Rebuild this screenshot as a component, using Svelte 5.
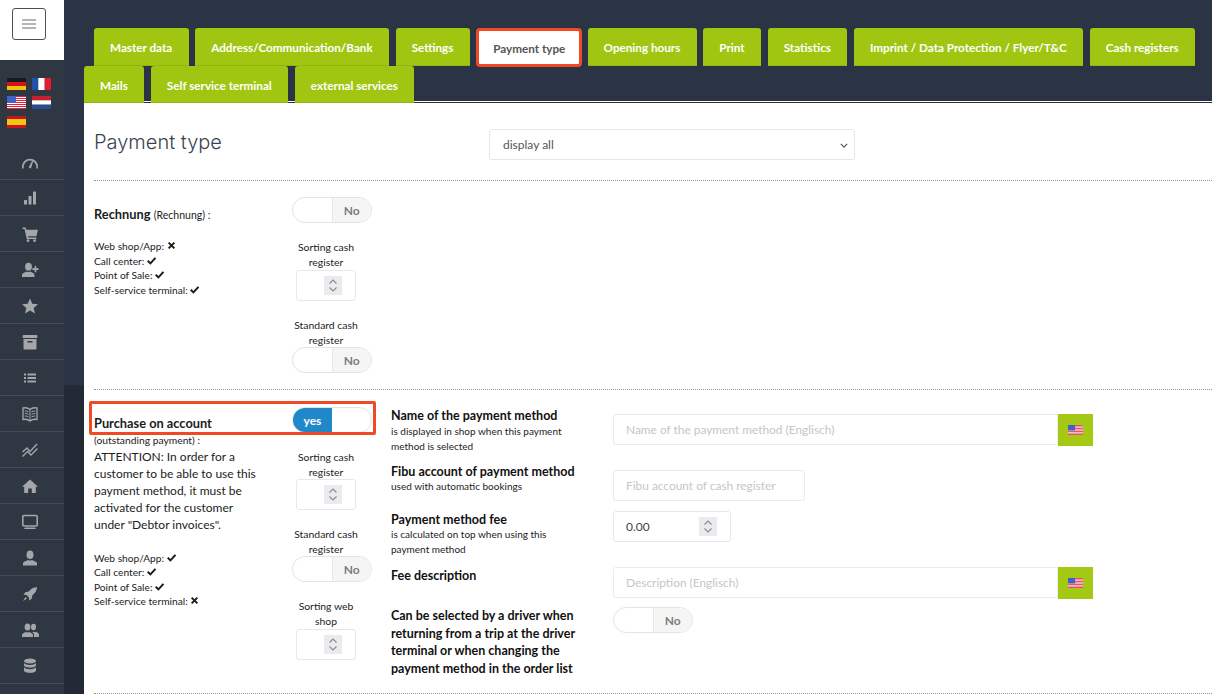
<script>
	const tabsTop = ['Master data', 'Address/Communication/Bank', 'Settings', 'Payment type', 'Opening hours', 'Print', 'Statistics', 'Imprint / Data Protection / Flyer/T&C', 'Cash registers'];
	const tabsBottom = ['Mails', 'Self service terminal', 'external services'];
	const menu = ['gauge', 'bars', 'cart', 'userplus', 'star', 'archive', 'list', 'book', 'chart', 'home', 'monitor', 'user', 'rocket', 'users', 'database'];
	const channelsA = [['Web shop/App:', false], ['Call center:', true], ['Point of Sale:', true], ['Self-service terminal:', true]];
	const channelsB = [['Web shop/App:', true], ['Call center:', true], ['Point of Sale:', true], ['Self-service terminal:', false]];
</script>

{#snippet usFlag()}
	<svg class="flag" viewBox="0 0 19 13" preserveAspectRatio="none">
		<rect width="19" height="13" fill="#fff" />
		{#each [0, 2, 4, 6, 8, 10, 12] as y}
			<rect {y} width="19" height="1" fill="#e0203a" />
		{/each}
		<rect width="9" height="7" fill="#3f62c4" />
	</svg>
{/snippet}

{#snippet toggle(on)}
	<div class="toggle">
		{#if on}
			<span class="side yes">yes</span><span class="side blank"></span>
		{:else}
			<span class="side blank"></span><span class="side no">No</span>
		{/if}
	</div>
{/snippet}

{#snippet spinner()}
	<span class="spinner">
		<svg viewBox="0 0 18 19" width="18" height="19" fill="none" stroke="#8a8a8e" stroke-width="1.1">
			<path d="M5.5 7.5 9 4l3.5 3.5M5.5 11.5 9 15l3.5-3.5" />
		</svg>
	</span>
{/snippet}

{#snippet channels(list)}
	<ul class="channels">
		{#each list as [name, ok]}
			<li>
				{name}
				<svg viewBox="0 0 10 10" width="9" height="9" fill="none" stroke="#1d1d1d" stroke-width="2.2">
					{#if ok}
						<path d="M.8 5.2 3.8 8.2 9.4 2" />
					{:else}
						<path d="M1.8 1.8 8.2 8.2M8.2 1.8 1.8 8.2" />
					{/if}
				</svg>
			</li>
		{/each}
	</ul>
{/snippet}

{#snippet icon(name)}
	<svg viewBox="0 0 18 18" width="18" height="18" fill="#a4a6aa">
		{#if name === 'gauge'}
			<path d="M2 14.5a7.2 7.2 0 1 1 14 0" fill="none" stroke="#a4a6aa" stroke-width="1.8" transform="translate(0 1)" />
			<path d="M7.6 14.5 11.8 6.500l.7.4L10 15.500z" />
		{:else if name === 'bars'}
			<rect x="3" y="11" width="3" height="4.5" rx=".5" />
			<rect x="7.5" y="7" width="3" height="8.5" rx=".5" />
			<rect x="12" y="2.5" width="3" height="13" rx=".5" />
		{:else if name === 'cart'}
			<path d="M1.5 2.5h3.2l.6 2.2H17l-1.6 6.6H7l.3 1.3h8.1v1.5H5.8L3.5 4H1.5z" />
			<circle cx="7" cy="15.7" r="1.4" />
			<circle cx="13.6" cy="15.7" r="1.4" />
		{:else if name === 'userplus'}
			<ellipse cx="7.5" cy="5.8" rx="3.4" ry="4" />
			<path d="M1 16v-2c0-1.800 3-2.500 4.600-3.500 1.200.7 2.600.7 3.800 0 1.600 1 4.100 1.700 4.100 3.500v2z" />
			<path d="M13.600 5h1.700v2.300h2.300V9h-2.300v2.300h-1.700V9h-2.300V7.300h2.300z" />
		{:else if name === 'star'}
			<polygon points="9,1.5 11.3,6.700 17,7.300 12.700,11 14,16.500 9,13.600 4,16.500 5.300,11 1,7.300 6.700,6.700" />
		{:else if name === 'archive'}
			<path d="M2.500 2h13a.8.8 0 0 1 .8.8V5H1.700V2.800a.8.8 0 0 1 .8-.8z" />
			<path fill-rule="evenodd" d="M2.500 6h13v9.500a1 1 0 0 1-1 1h-11a1 1 0 0 1-1-1zM6.500 8v1.500h5V8z" />
		{:else if name === 'list'}
			<path d="M3 4.500h2v2H3zM3 8h2v2H3zM3 11.500h2v2H3zM6.500 4.500H15v2H6.500zM6.500 8H15v2H6.500zM6.500 11.500H15v2H6.500z" />
		{:else if name === 'book'}
			<path d="M9 4.500C7.500 3 4.500 2.500 2 3v11.500c2.500-.5 5.500 0 7 1.500 1.500-1.500 4.500-2 7-1.500V3c-2.500-.5-5.500 0-7 1.500z" fill="none" stroke="#a4a6aa" stroke-width="1.3" />
			<path d="M9 4.500V16M3.800 6c1.300 0 2.500.2 3.600.8M3.800 8.500c1.300 0 2.500.2 3.600.8M3.800 11c1.300 0 2.500.2 3.600.8M14.200 6c-1.300 0-2.500.2-3.600.8M14.200 8.500c-1.300 0-2.500.2-3.600.8M14.200 11c-1.300 0-2.500.2-3.600.8" fill="none" stroke="#a4a6aa" stroke-width="1" />
		{:else if name === 'chart'}
			<path d="M1.500 11 6 7l3 3.500L16 3M1.500 15.500 6.500 10.500l3.500 3.500 6.500-6.500" fill="none" stroke="#a4a6aa" stroke-width="1.4" />
		{:else if name === 'home'}
			<path d="M9 2.500 17 9.700h-2.200V16h-4v-4.500H7.200V16h-4V9.700H1z" />
		{:else if name === 'monitor'}
			<rect x="1.800" y="2.500" width="14.400" height="10.500" rx="1" fill="none" stroke="#a4a6aa" stroke-width="1.6" />
			<path d="M4 14.500h10l1 1.500H3z" />
		{:else if name === 'user'}
			<ellipse cx="9" cy="5.800" rx="3.500" ry="4.300" />
			<path d="M2 16.500v-2c0-1.800 3.500-2.500 5-3.500 1.300.8 2.700.8 4 0 1.500 1 5 1.700 5 3.500v2z" />
		{:else if name === 'rocket'}
			<path d="M16 2c-3.500.2-6.200 1.600-8.300 4.600L4.300 7.300 2.500 9.800l3 .3 2.400 2.400.3 3 2.500-1.800.7-3.400C14.400 8.200 15.800 5.500 16 2z" />
			<path d="M4.500 12 2 16l4-2.500z" />
		{:else if name === 'users'}
			<ellipse cx="6.500" cy="6" rx="2.900" ry="3.500" />
			<path d="M1 16v-2c0-1.500 2.500-2.200 3.800-3 1.100.6 2.300.6 3.400 0 1.300.8 3.800 1.500 3.800 3v2z" />
			<ellipse cx="12.500" cy="6" rx="2.500" ry="3.200" />
			<path d="M13 16v-2.200c0-1-.6-1.700-1.800-2.500l.9-.6c1 .6 2 .6 3 0 1.100.8 2.900 1.400 2.900 2.800V16z" />
		{:else if name === 'database'}
			<ellipse cx="9" cy="4" rx="6" ry="2.500" />
			<path d="M3 6v2.300c0 1.300 2.700 2.400 6 2.400s6-1.100 6-2.400V6c-1 1.200-3.300 2-6 2s-5-.8-6-2z" />
			<path d="M3 10.300v3.300c0 1.300 2.700 2.400 6 2.400s6-1.100 6-2.400v-3.300c-1 1.200-3.300 2-6 2s-5-.8-6-2z" />
		{/if}
	</svg>
{/snippet}

<div class="shell">
	<aside>
		<div class="brand">
			<button class="burger" aria-label="menu"><i></i><i></i><i></i></button>
		</div>
		<div class="flags">
			<svg viewBox="0 0 19 12" class="lang"><rect width="19" height="4" fill="#1a1a1a" /><rect y="4" width="19" height="4" fill="#d0121b" /><rect y="8" width="19" height="4" fill="#f4c20d" /></svg>
			<svg viewBox="0 0 19 12" class="lang"><rect width="6.3" height="12" fill="#2350a8" /><rect x="6.3" width="6.4" height="12" fill="#fff" /><rect x="12.7" width="6.3" height="12" fill="#e01e30" /></svg>
			<span class="lang us">{@render usFlag()}</span>
			<svg viewBox="0 0 19 13" class="lang tall"><rect width="19" height="4.3" fill="#c4202e" /><rect y="4.3" width="19" height="4.4" fill="#fff" /><rect y="8.7" width="19" height="4.3" fill="#2a4a94" /></svg>
			<svg viewBox="0 0 19 12" class="lang"><rect width="19" height="12" fill="#c8141e" /><rect y="3" width="19" height="6" fill="#f7c40f" /></svg>
		</div>
		<nav>
			{#each menu as name}
				<div class="item">{@render icon(name)}</div>
			{/each}
		</nav>
	</aside>

	<div class="gutter"></div>

	<div class="main">
		<div class="tabs">
			<div class="tab-row first">
				{#each tabsTop as tab}
					<span class="tab" class:active={tab === 'Payment type'}>{tab}</span>
				{/each}
			</div>
			<div class="tab-row">
				{#each tabsBottom as tab}
					<span class="tab">{tab}</span>
				{/each}
			</div>
		</div>

		<div class="sheet">
			<header>
				<h1>Payment type</h1>
				<div class="select">
					<select><option>display all</option></select>
					<svg viewBox="0 0 10 6" width="8" height="5" fill="none" stroke="#555" stroke-width="1.4"><path d="M1 1 5 5 9 1" /></svg>
				</div>
			</header>

			<section class="row-a">
				<div class="col-left">
					<p class="title"><b>Rechnung</b> <small>(Rechnung) :</small></p>
					{@render channels(channelsA)}
				</div>
				<div class="col-mid">
					{@render toggle(false)}
					<div class="stack">
						<p class="cap gap-top">Sorting cash register</p>
						<div class="spin">{@render spinner()}</div>
						<p class="cap gap-top2">Standard cash register</p>
					</div>
					{@render toggle(false)}
				</div>
			</section>

			<section class="row-b">
				<div class="mark"></div>
				<div class="col-left">
					<p class="title big"><b>Purchase on account</b></p>
					<p class="outstanding">(outstanding payment) :</p>
					<p class="attention">ATTENTION: In order for a customer to be able to use this payment method, it must be activated for the customer under "Debtor invoices".</p>
					{@render channels(channelsB)}
				</div>
				<div class="col-mid">
					{@render toggle(true)}
					<div class="stack">
						<p class="cap gap-top">Sorting cash register</p>
						<div class="spin">{@render spinner()}</div>
						<p class="cap gap-top2">Standard cash register</p>
					</div>
					{@render toggle(false)}
					<div class="stack web">
						<p class="cap gap-top2">Sorting web shop</p>
						<div class="spin">{@render spinner()}</div>
					</div>
				</div>
				<div class="details">
					<div>
						<h3>Name of the payment method</h3>
						<p class="hint">is displayed in shop when this payment<br />method is selected</p>
					</div>
					<div class="group drop">
						<input placeholder="Name of the payment method (Englisch)" />
						<span class="addon">{@render usFlag()}</span>
					</div>

					<div>
						<h3>Fibu account of payment method</h3>
						<p class="hint">used with automatic bookings</p>
					</div>
					<div class="drop"><input class="short" placeholder="Fibu account of cash register" /></div>

					<div>
						<h3>Payment method fee</h3>
						<p class="hint">is calculated on top when using this<br />payment method</p>
					</div>
					<div class="spin fee"><span>0.00</span>{@render spinner()}</div>

					<div><h3>Fee description</h3></div>
					<div class="group lift">
						<input placeholder="Description (Englisch)" />
						<span class="addon">{@render usFlag()}</span>
					</div>

					<div><h3 class="long">Can be selected by a driver when returning from a trip at the driver terminal or when changing the payment method in the order list</h3></div>
					<div>{@render toggle(false)}</div>
				</div>
			</section>
		</div>
	</div>
</div>

<style>
	:global(body) {
		background: #2b3445;
		font-family: Lato, 'Open Sans', sans-serif;
		color: #1c1c1c;
	}

	p,
	h1,
	h3,
	ul {
		margin: 0;
		padding: 0;
	}

	.shell {
		display: flex;
		height: 694px;
		overflow: hidden;
	}

	aside {
		width: 64px;
		flex: none;
		background: #2f3742;
	}

	.brand {
		height: 60px;
		padding: 8px 0 0 12px;
		box-sizing: border-box;
		background: #fff;
	}

	.burger {
		display: flex;
		flex-direction: column;
		justify-content: center;
		gap: 2px;
		width: 34px;
		height: 32px;
		padding: 0 9px;
		background: #fff;
		border: 1px solid #4a4f58;
		border-radius: 3px;
	}

	.burger i {
		display: block;
		height: 2px;
		background: #b5b5b5;
	}

	.flags {
		display: flex;
		flex-wrap: wrap;
		align-items: flex-start;
		align-content: flex-start;
		gap: 6px;
		width: 50px;
		height: 66px;
		padding: 18px 0 0 7px;
	}

	.lang {
		display: block;
		width: 19px;
		height: 12px;
	}

	.lang.us,
	.lang.tall {
		height: 13px;
		margin-bottom: 1px;
	}

	.lang.us .flag {
		width: 19px;
		height: 13px;
	}

	.flag {
		display: block;
		width: 15px;
		height: 10px;
	}

	.item {
		display: flex;
		align-items: center;
		justify-content: center;
		height: 35px;
		padding-right: 5px;
		border-bottom: 1px solid #464c56;
	}

	.gutter {
		width: 20px;
		flex: none;
		background: linear-gradient(#2b3445 385px, #222a36 385px);
	}

	.main {
		flex: 1;
		min-width: 0;
	}

	.tabs {
		height: 102px;
		padding-top: 28px;
		box-sizing: border-box;
		border-bottom: 1px solid #fff;
	}

	.tab-row {
		display: flex;
		gap: 6.5px;
		height: 37px;
	}

	.tab-row.first {
		padding-left: 10px;
		height: 38px;
	}

	.tab {
		display: flex;
		align-items: center;
		padding: 1px 16.5px 0 16px;
		background: #a1c612;
		border-bottom: 1px solid #94b510;
		border-radius: 3px 3px 0 0;
		color: #fff;
		font-size: 11.7px;
		font-weight: 700;
		white-space: nowrap;
	}

	.tab.active {
		background: #fff;
		color: #555;
		padding: 1px 13.75px 0;
		border: 3px solid #ef4a25;
		border-radius: 4px;
		margin: 0 -1px -1px 0;
	}

	.sheet {
		height: 592px;
		padding-left: 10px;
		background: #fff;
		border-top: 1px solid #2a2f38;
		box-sizing: border-box;
		overflow: hidden;
	}

	header {
		display: flex;
		height: 78px;
		padding-top: 26px;
		box-sizing: border-box;
		border-bottom: 1px dotted #999;
	}

	h1 {
		width: 395px;
		font-family: Inter, 'Liberation Sans', sans-serif;
		font-size: 20px;
		font-weight: 300;
		line-height: 26px;
		color: #3c4350;
	}

	.select {
		position: relative;
		width: 366px;
		height: 31px;
	}

	.select select {
		width: 100%;
		height: 100%;
		padding: 0 13px;
		appearance: none;
		background: #fff;
		border: 1px solid #e6e6e6;
		border-radius: 3px;
		font: 12px Lato, sans-serif;
		color: #555;
	}

	.select svg {
		position: absolute;
		right: 7px;
		top: 14px;
	}

	section {
		display: flex;
		position: relative;
		border-bottom: 1px dotted #999;
	}

	.row-a {
		height: 209px;
		padding-top: 16px;
		box-sizing: border-box;
	}

	.row-b {
		height: 304px;
		padding-top: 17px;
		box-sizing: border-box;
	}

	.col-left {
		width: 198px;
		flex: none;
	}

	.title {
		height: 26px;
		font-size: 12.8px;
		line-height: 34px;
		white-space: nowrap;
	}

	.title small {
		font-size: 10.5px;
	}

	.title.big {
		line-height: 32px;
	}

	.outstanding {
		font-size: 10.3px;
		line-height: 14px;
	}

	.attention {
		max-width: 165px;
		margin-top: .5px;
		font-size: 12px;
		line-height: 17px;
	}

	.channels {
		margin-top: 16px;
		list-style: none;
		font-size: 10.2px;
		line-height: 14.6px;
	}

	.row-b .channels {
		margin-top: 18px;
	}

	.col-mid {
		width: 80px;
		flex: none;
	}

	.stack {
		width: 68px;
	}

	.row-b .stack .spin {
		margin-top: -1px;
	}

	.row-b .stack.web .spin {
		margin-top: 1px;
	}

	.cap {
		font-size: 10.4px;
		line-height: 15px;
		text-align: center;
	}

	.gap-top {
		margin-top: 17px;
	}

	.gap-top2 {
		margin-top: 17px;
		line-height: 14.5px;
	}

	.toggle {
		display: flex;
		width: 80px;
		height: 26px;
		box-sizing: border-box;
		border: 1px solid #e4e4e4;
		border-radius: 13px;
		overflow: hidden;
		font-size: 12px;
		font-weight: 700;
		background: #fff;
	}

	.side {
		display: flex;
		align-items: center;
		justify-content: center;
		flex: 1;
	}

	.no {
		background: #f5f5f5;
		border-left: 1px solid #e8e8e8;
		color: #7d7d7d;
	}

	.yes {
		background: #2088c9;
		color: #fff;
	}

	.spin {
		display: flex;
		align-items: center;
		justify-content: flex-end;
		width: 60px;
		height: 31px;
		margin: 0 auto;
		padding-right: 13px;
		box-sizing: border-box;
		border: 1px solid #e8e8e8;
		border-radius: 3px;
	}

	.spin.fee {
		justify-content: space-between;
		width: 118px;
		margin: -1px 0 0;
		padding-left: 12px;
		font-size: 12px;
		color: #444;
	}

	.spinner {
		display: block;
		width: 18px;
		height: 19px;
		background: #ebebef;
	}

	.spinner svg {
		display: block;
	}

	.mark {
		position: absolute;
		left: -5px;
		top: 11px;
		width: 287px;
		height: 34px;
		box-sizing: border-box;
		border: 3px solid #ef4a25;
		border-radius: 2px;
		pointer-events: none;
	}

	.details {
		display: grid;
		grid-template-columns: 222px 480px;
		grid-template-rows: 55.5px 48px 56px 39.5px auto;
		margin: 1px 0 0 19px;
	}

	h3 {
		font-size: 12.5px;
		font-weight: 700;
		line-height: 15px;
		color: #111;
	}

	h3.long {
		width: 195px;
		line-height: 17.5px;
	}

	.hint {
		font-size: 10px;
		line-height: 15px;
		padding-top: .5px;
	}

	.drop {
		padding-top: 6px;
	}

	.group {
		display: flex;
		align-items: flex-start;
	}

	.lift {
		margin-top: -1px;
	}

	input {
		width: 445px;
		height: 31px;
		padding: 0 12px;
		box-sizing: border-box;
		border: 1px solid #ebebeb;
		border-radius: 3px 0 0 3px;
		font: 11.9px Lato, sans-serif;
	}

	input::placeholder {
		color: #c4c6c9;
	}

	input.short {
		width: 192px;
		border-radius: 3px;
	}

	.addon {
		display: flex;
		align-items: center;
		justify-content: center;
		width: 35px;
		height: 32px;
		background: #a4c914;
	}
</style>
